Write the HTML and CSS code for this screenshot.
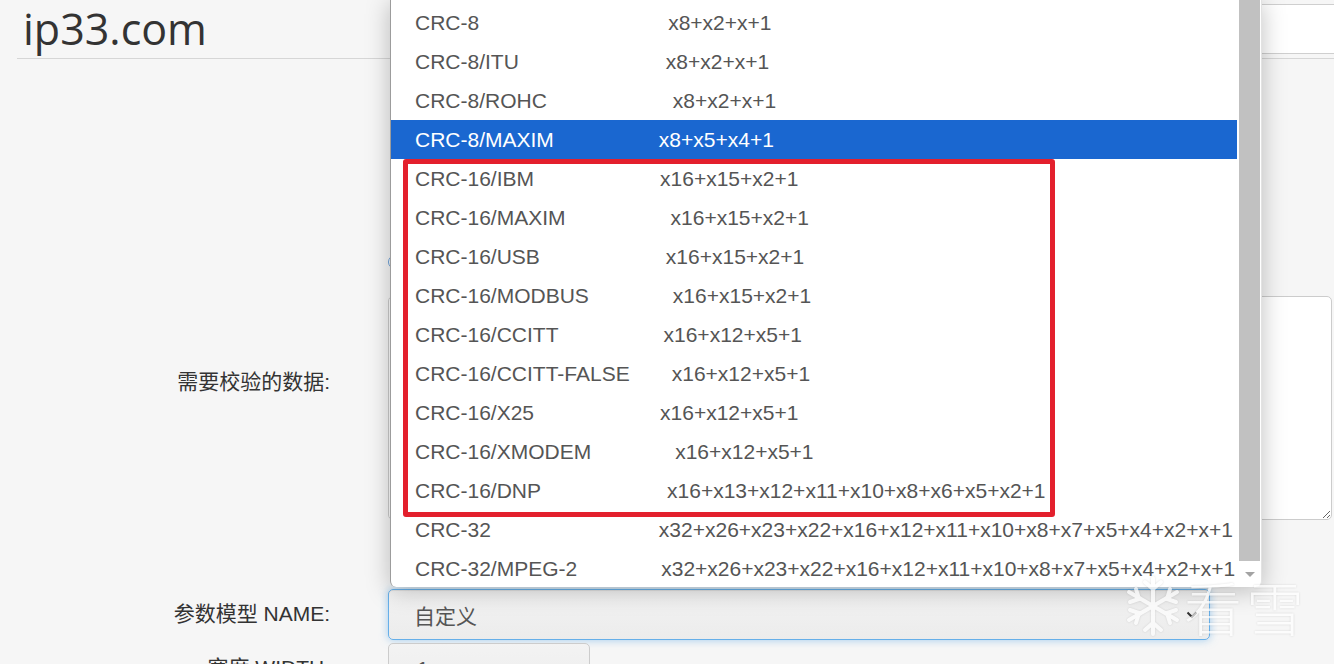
FILE: index.html
```html
<!DOCTYPE html>
<html lang="zh-CN">
<head>
    <meta charset="UTF-8">
    <meta name="viewport" content="width=device-width, initial-scale=1.0">
    <title>CRC 校验计算</title>
    <link rel="stylesheet" href="styles.css">
</head>
<body>
    <div class="page">
        <header class="top">
            <h1 class="logo">ip33.com</h1>
            <input class="search" type="text">
        </header>

        <form class="crc-form">
            <div class="row row-data">
                <label class="row-label">需要校验的数据:</label>
                <div class="row-field">
                    <div class="radio-line"><span class="radio"></span></div>
                    <textarea class="data-input"></textarea>
                </div>
            </div>

            <div class="row row-name">
                <label class="row-label">参数模型 NAME:</label>
                <div class="row-field">
                    <div class="select select-name">
                        <span>自定义</span>
                        <svg class="chevron" width="12" height="8" viewBox="0 0 12 8"><path d="M1.5 1.5 L6 6 L10.5 1.5" fill="none" stroke="#333" stroke-width="2"/></svg>
                    </div>
                </div>
            </div>

            <div class="row row-width">
                <label class="row-label">宽度 WIDTH:</label>
                <div class="row-field">
                    <div class="select select-width">
                        <span>1</span>
                        <svg class="chevron" width="12" height="8" viewBox="0 0 12 8"><path d="M1.5 1.5 L6 6 L10.5 1.5" fill="none" stroke="#333" stroke-width="2"/></svg>
                    </div>
                </div>
            </div>
        </form>
    </div>

    <!-- open list of the NAME select -->
    <div class="dropdown">
        <ul class="options">
            <li>CRC-8&emsp;&emsp;&emsp;&emsp;&emsp;&emsp;&emsp;&emsp;&emsp;x8+x2+x+1</li>
            <li>CRC-8/ITU&emsp;&emsp;&emsp;&emsp;&emsp;&emsp;&emsp;x8+x2+x+1</li>
            <li>CRC-8/ROHC&emsp;&emsp;&emsp;&emsp;&emsp;&emsp;x8+x2+x+1</li>
            <li class="selected">CRC-8/MAXIM&emsp;&emsp;&emsp;&emsp;&emsp;x8+x5+x4+1</li>
            <li>CRC-16/IBM&emsp;&emsp;&emsp;&emsp;&emsp;&emsp;x16+x15+x2+1</li>
            <li>CRC-16/MAXIM&emsp;&emsp;&emsp;&emsp;&emsp;x16+x15+x2+1</li>
            <li>CRC-16/USB&emsp;&emsp;&emsp;&emsp;&emsp;&emsp;x16+x15+x2+1</li>
            <li>CRC-16/MODBUS&emsp;&emsp;&emsp;&emsp;x16+x15+x2+1</li>
            <li>CRC-16/CCITT&emsp;&emsp;&emsp;&emsp;&emsp;x16+x12+x5+1</li>
            <li>CRC-16/CCITT-FALSE&emsp;&emsp;x16+x12+x5+1</li>
            <li>CRC-16/X25&emsp;&emsp;&emsp;&emsp;&emsp;&emsp;x16+x12+x5+1</li>
            <li>CRC-16/XMODEM&emsp;&emsp;&emsp;&emsp;x16+x12+x5+1</li>
            <li>CRC-16/DNP&emsp;&emsp;&emsp;&emsp;&emsp;&emsp;x16+x13+x12+x11+x10+x8+x6+x5+x2+1</li>
            <li>CRC-32&emsp;&emsp;&emsp;&emsp;&emsp;&emsp;&emsp;&emsp;x32+x26+x23+x22+x16+x12+x11+x10+x8+x7+x5+x4+x2+x+1</li>
            <li>CRC-32/MPEG-2&emsp;&emsp;&emsp;&emsp;x32+x26+x23+x22+x16+x12+x11+x10+x8+x7+x5+x4+x2+x+1</li>
        </ul>
        <div class="scrollbar">
            <div class="thumb"></div>
            <div class="arrow"></div>
        </div>
        <div class="highlight-box"></div>
    </div>

    <div class="watermark">
        <svg width="58" height="64" viewBox="0 0 58 64">
            <g fill="none" stroke="#fff" stroke-width="4" stroke-linecap="round">
                <path d="M29 4 V60 M5 18 L53 46 M5 46 L53 18"/>
                <path d="M21 8 L29 15 L37 8 M21 56 L29 49 L37 56"/>
                <path d="M6 28 L15 25 L12 15 M52 36 L43 39 L46 49"/>
                <path d="M6 36 L15 39 L12 49 M52 28 L43 25 L46 15"/>
            </g>
        </svg>
        <span>看雪</span>
    </div>
</body>
</html>
```

FILE: styles.css
```css
body {
    margin: 0;
    background-color: #f6f6f6;
    font-family: "Liberation Sans", Arial, "Noto Sans CJK SC", sans-serif;
    color: #333;
    overflow: hidden;
}

.page {
    width: 1334px;
    height: 664px;
    overflow: hidden;
}

.top {
    display: flex;
    align-items: flex-start;
    height: 58px;
    margin-left: 17px;
    border-bottom: 1px solid #d6d6d6;
}

.logo {
    margin: 0 0 0 6px;
    font-family: "Open Sans", sans-serif;
    font-weight: 400;
    font-size: 43px;
    line-height: 58px;
    color: #333;
}

.search {
    margin: 4px -10px 0 auto;
    width: 560px;
    height: 50px;
    box-sizing: border-box;
    border: 1px solid #cfcfcf;
    background-color: #fff;
}

.crc-form {
    padding-top: 186px;
}

.row {
    display: grid;
    grid-template-columns: 330px 1fr;
    column-gap: 58px;
    align-items: center;
}

.row-label {
    text-align: right;
    font-size: 21px;
    color: #333;
    padding-bottom: 5px;
}

.row-name {
    margin-top: 69px;
}

.row-width {
    margin-top: 3px;
}

.radio-line {
    height: 51px;
    box-sizing: border-box;
    padding-top: 10px;
}

.radio {
    display: block;
    width: 12px;
    height: 12px;
    border: 1px solid #6a9fd8;
    border-radius: 50%;
    background-color: #fff;
}

.data-input {
    display: block;
    width: 944px;
    height: 224px;
    box-sizing: border-box;
    border: 1px solid #cccccc;
    border-radius: 5px;
    background-color: #fff;
    margin: 0;
}

.select {
    display: flex;
    align-items: center;
    justify-content: space-between;
    height: 51px;
    box-sizing: border-box;
    padding: 0 11px 0 25px;
    border: 1px solid #cccccc;
    border-radius: 5px;
    background: linear-gradient(#f3f3f3, #ececec);
    font-size: 21px;
    color: #555;
}

.select-name {
    width: 822px;
    border-color: #66afe9;
    box-shadow: inset 0 1px 1px rgba(0, 0, 0, 0.075), 0 0 8px rgba(102, 175, 233, 0.6);
}

.select-width {
    width: 202px;
    padding-left: 28px;
}

/* open select list */
.dropdown {
    position: absolute;
    left: 390px;
    top: 0;
    width: 870px;
    height: 587px;
    display: flex;
    background-color: #fff;
    border-left: 1px solid #9c9c9c;
    border-right: 1px solid #e2e2e2;
    border-radius: 0 0 6px 6px;
    box-shadow: 0 3px 24px rgba(0, 0, 0, 0.25);
    overflow: hidden;
}

.options {
    list-style: none;
    margin: 0;
    padding: 3px 0 0;
    width: 846px;
    font-family: "Liberation Sans", Arial, sans-serif;
    font-size: 21px;
    color: #555;
}

.options li {
    height: 39px;
    line-height: 39px;
    padding-left: 24px;
    white-space: nowrap;
}

.options li.selected {
    background-color: #1a67d0;
    color: #fff;
}

.scrollbar {
    position: relative;
    width: 24px;
}

.thumb {
    margin-left: 2px;
    width: 21px;
    height: 561px;
    background-color: #c1c1c1;
}

.arrow {
    position: absolute;
    left: 8px;
    top: 572px;
    width: 0;
    height: 0;
    border-left: 5px solid transparent;
    border-right: 5px solid transparent;
    border-top: 5px solid #a3a3a3;
}

.highlight-box {
    position: absolute;
    left: 12px;
    top: 159px;
    width: 642px;
    height: 348px;
    border: 5px solid #e3202d;
    border-radius: 3px;
}

.watermark {
    position: absolute;
    left: 1124px;
    top: 574px;
    display: flex;
    align-items: center;
    gap: 2px;
    opacity: 0.7;
    filter: drop-shadow(0 0 1px rgba(0, 0, 0, 0.18));
}

.watermark span {
    font-family: "Noto Sans CJK SC", sans-serif;
    font-weight: 300;
    font-size: 58px;
    line-height: 64px;
    color: #fff;
    letter-spacing: 4px;
}
```
